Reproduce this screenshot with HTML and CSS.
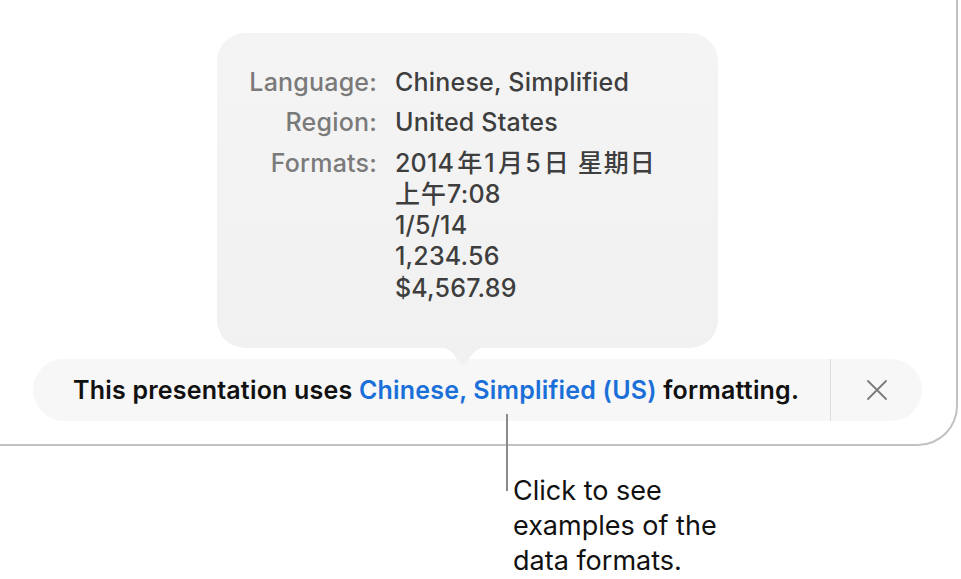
FILE: index.html
```html
<!DOCTYPE html>
<html lang="en">
<head>
<meta charset="utf-8">
<title>Formatting</title>
<link rel="stylesheet" href="styles.css">
</head>
<body>
<div class="window">
  <div class="popover">
    <div class="info">
      <div class="label">Language:</div>
      <div class="value">Chinese, Simplified</div>
      <div class="label">Region:</div>
      <div class="value">United States</div>
      <div class="label">Formats:</div>
      <div class="value">2014<span class="cj">年</span>1<span class="cj">月</span>5<span class="cj">日</span> <span class="cjw">星期日</span><br><span class="cjw">上午</span>7:08<br>1/5/14<br>1,234.56<br>$4,567.89</div>
    </div>
    <svg class="arrow" width="52" height="22" viewBox="0 0 52 22"><path d="M0 0 C10 0 15 4 20 12 Q26 23 32 12 C37 4 42 0 52 0 Z" fill="#f1f1f1"/></svg>
  </div>
  <div class="bar">
    <div class="message">This presentation uses <span class="link">Chinese, Simplified (US)</span> formatting.</div>
    <div class="divider"></div>
    <div class="close">
      <svg width="22" height="22" viewBox="0 0 22 22"><path d="M2 2 L20 20 M20 2 L2 20" stroke="#7a7a7a" stroke-width="1.8" stroke-linecap="round" fill="none"/></svg>
    </div>
  </div>
</div>
<div class="callout">
  <div class="leader"></div>
  <div class="note">Click to see<br>examples of the<br>data formats.</div>
</div>
</body>
</html>
```

FILE: styles.css
```css
html, body {
  margin: 0;
  padding: 0;
  background: #ffffff;
}
body {
  font-family: Inter, "Noto Sans CJK SC", sans-serif;
  width: 961px;
  height: 579px;
  overflow: hidden;
}
.window {
  width: 956px;
  padding: 33px 0 23px 0;
  border-right: 2px solid #c2c2c2;
  border-bottom: 2px solid #c2c2c2;
  border-bottom-right-radius: 40px;
  box-sizing: content-box;
}
.popover {
  position: relative;
  margin-left: 217px;
  width: 501px;
  height: 315px;
  box-sizing: border-box;
  background: linear-gradient(#f4f4f4, #f1f1f1);
  border-radius: 28px;
  padding: 34px 0 0 0;
}
.info {
  display: grid;
  grid-template-columns: 160px auto;
  column-gap: 18px;
  row-gap: 9px;
  font-size: 25px;
  line-height: 31.3px;
  font-weight: 500;
  letter-spacing: 0.2px;
  font-family: Inter, "Noto Sans CJK SC", sans-serif;
}
.label {
  text-align: right;
  color: #7a7a7a;
}
.value {
  color: #3e3e3e;
  white-space: nowrap;
}
.cj {
  margin: 0 2px 0 3px;
}
.cjw {
  letter-spacing: 1px;
}
.arrow {
  position: absolute;
  left: 220px;
  top: 314px;
}
.bar {
  margin: 11px 0 0 33px;
  width: 889px;
  height: 62px;
  border-radius: 31px;
  background: #f7f7f7;
  display: flex;
  align-items: stretch;
}
.message {
  flex: 1;
  display: flex;
  align-items: center;
  padding-left: 40px;
  font-size: 25px;
  font-weight: 600;
  letter-spacing: 0.2px;
  color: #111111;
  white-space: pre;
}
.link {
  color: #1b6fd9;
}
.divider {
  width: 1px;
  background: #dcdcdc;
}
.close {
  width: 91px;
  display: flex;
  align-items: center;
  justify-content: center;
}
.callout {
  display: flex;
  margin-left: 506px;
}
.leader {
  width: 2px;
  height: 77px;
  margin-top: -32px;
  background: #8a8a8a;
}
.note {
  margin: 27px 0 0 5px;
  font-size: 27px;
  line-height: 35px;
  color: #111111;
  font-family: Inter, sans-serif;
}
```
